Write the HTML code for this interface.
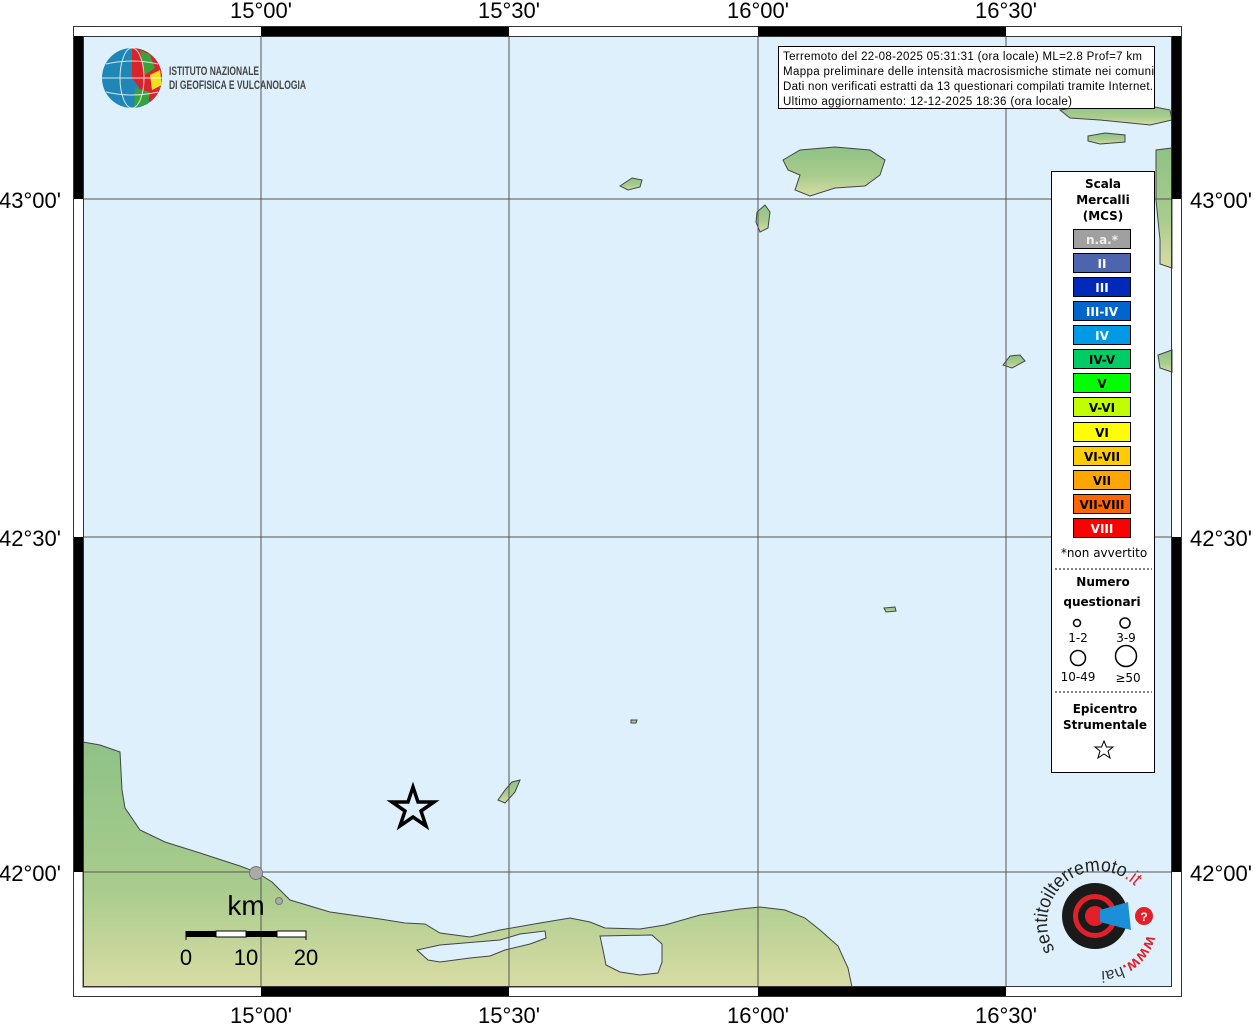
<!DOCTYPE html>
<html><head><meta charset="utf-8"><style>
body{margin:0;background:#fff;width:1255px;height:1024px;overflow:hidden;font-family:"Liberation Sans",sans-serif}
</style></head><body>
<svg width="1255" height="1024" xmlns="http://www.w3.org/2000/svg" style="position:absolute;left:0;top:0">
<defs>
<linearGradient id="land" x1="0" y1="0" x2="0" y2="1"><stop offset="0" stop-color="#8fc286"/><stop offset="0.6" stop-color="#a9cc8e"/><stop offset="1" stop-color="#d9dca4"/></linearGradient>
</defs>
<rect x="83" y="36" width="1089" height="951" fill="#dff0fd"/>
<g fill="url(#land)" stroke="#444" stroke-width="1">
<path d="M83,742 L100,745 L120,752 L122,790 L125,808 L140,830 L165,842 L200,853 L240,866 L256,872 L272,882 L290,900 L330,912 L380,919 L405,923 L425,924 L440,933 L470,937 L500,930 L540,923 L570,918 L590,922 L605,928 L640,929 L665,925 L700,915 L740,909 L760,907 L785,910 L805,918 L820,930 L838,946 L848,968 L852,987 L83,987 Z"/>
<path d="M417,950 L440,945 L500,940 L520,934 L545,931 L546,938 L530,944 L505,950 L490,956 L470,958 L440,962 L428,960 Z" fill="#dff0fd"/>
<path d="M600,936 L652,935 L662,944 L662,962 L658,973 L640,975 L620,972 L606,965 L603,950 Z" fill="#dff0fd"/>
<path d="M498,800 L505,790 L512,782 L520,780 L515,792 L505,803 Z"/>
<path d="M620,186 L632,178 L642,180 L640,187 L628,190 Z"/>
<path d="M783,160 L800,150 L835,147 L870,150 L885,160 L880,175 L865,186 L835,188 L810,196 L795,190 L800,175 L788,170 Z"/>
<path d="M757,212 L765,205 L770,212 L768,228 L760,232 L756,222 Z"/>
<path d="M1060,110 L1090,105 L1130,108 L1150,106 L1170,110 L1172,120 L1150,125 L1100,120 L1070,118 Z"/>
<path d="M1088,136 L1105,133 L1125,135 L1125,142 L1100,144 L1088,141 Z"/>
<path d="M1003,365 L1010,356 L1020,355 L1025,361 L1012,368 Z"/>
<path d="M1156,150 L1172,148 L1172,268 L1160,264 L1160,240 L1156,200 Z"/>
<path d="M1158,355 L1172,350 L1172,372 L1160,368 Z"/>
<path d="M884,608 L895,607 L896,611 L886,612 Z"/>
<path d="M631,720 L637,720 L636,723 L631,723 Z"/>
</g>
<g stroke="#555" stroke-width="1">
<line x1="261" y1="36" x2="261" y2="987"/><line x1="509" y1="36" x2="509" y2="987"/><line x1="758" y1="36" x2="758" y2="987"/><line x1="1006" y1="36" x2="1006" y2="987"/>
<line x1="83" y1="199" x2="1172" y2="199"/><line x1="83" y1="537" x2="1172" y2="537"/><line x1="83" y1="872" x2="1172" y2="872"/>
</g>
<rect x="73.5" y="26.5" width="1108" height="970" fill="none" stroke="#333"/>
<rect x="83.5" y="36.5" width="1088" height="950" fill="none" stroke="#333"/>
<g fill="#000">
<rect x="261" y="27" width="248" height="9"/><rect x="758" y="27" width="248" height="9"/>
<rect x="261" y="987" width="248" height="9"/><rect x="758" y="987" width="248" height="9"/>
<rect x="74" y="36" width="9" height="163"/><rect x="74" y="537" width="9" height="335"/>
<rect x="1172" y="36" width="9" height="163"/><rect x="1172" y="537" width="9" height="335"/>
</g>
<g font-size="22" fill="#000" text-anchor="middle" font-family="Liberation Sans,sans-serif">
<text x="261" y="18">15°00'</text><text x="509" y="18">15°30'</text><text x="758" y="18">16°00'</text><text x="1006" y="18">16°30'</text>
<text x="261" y="1023">15°00'</text><text x="509" y="1023">15°30'</text><text x="758" y="1023">16°00'</text><text x="1006" y="1023">16°30'</text>
</g>
<g font-size="22" fill="#000" font-family="Liberation Sans,sans-serif">
<text x="-1" y="208">43°00'</text><text x="-1" y="546">42°30'</text><text x="-1" y="881">42°00'</text>
<text x="1190" y="208">43°00'</text><text x="1190" y="546">42°30'</text><text x="1190" y="881">42°00'</text>
</g>
<path d="M413,787 L418,802 L434,802 L421,811 L426,826 L413,817 L400,826 L405,811 L392,802 L408,802 Z" fill="none" stroke="#000" stroke-width="3.5"/>
<circle cx="256" cy="873" r="6.5" fill="#aaa" stroke="#777"/>
<circle cx="279" cy="901" r="3.5" fill="#aaa" stroke="#777"/>
<text x="246" y="915" font-size="28" text-anchor="middle">km</text>
<rect x="186" y="931" width="30" height="6" fill="#000"/><rect x="216" y="931" width="30" height="6" fill="#fff" stroke="#000"/>
<rect x="246" y="931" width="31" height="6" fill="#000"/><rect x="277" y="931" width="29" height="6" fill="#fff" stroke="#000"/>
<line x1="186" y1="931" x2="186" y2="940" stroke="#000"/><line x1="306" y1="931" x2="306" y2="940" stroke="#000"/>
<g font-size="22" text-anchor="middle"><text x="186" y="965">0</text><text x="246" y="965">10</text><text x="306" y="965">20</text></g>
<circle cx="132" cy="78" r="30" fill="#1f87b5"/>
<path d="M132,48 A30,30 0 0 1 162,78 A30,30 0 0 1 150,102 L132,78 Z" fill="#d8242a"/>
<path d="M140,50 L150,55 L155,68 L145,75 Z" fill="#3aa23a"/>
<path d="M150,75 L160,70 L162,85 L152,90 Z" fill="#f2e01c"/>
<path d="M135,88 L150,92 L148,104 L134,107 Z" fill="#3aa23a"/>
<g stroke="#fff" stroke-width="1" fill="none" opacity="0.8"><ellipse cx="132" cy="78" rx="12" ry="30"/><line x1="102" y1="78" x2="162" y2="78"/><path d="M106,64 Q132,58 158,64 M106,92 Q132,98 158,92"/></g>
<text x="169" y="75" font-size="12" font-weight="bold" fill="#444" font-family="Liberation Sans Narrow,Liberation Sans,sans-serif" textLength="90" lengthAdjust="spacingAndGlyphs">ISTITUTO NAZIONALE</text>
<text x="169" y="89" font-size="12" font-weight="bold" fill="#444" font-family="Liberation Sans Narrow,Liberation Sans,sans-serif" textLength="137" lengthAdjust="spacingAndGlyphs">DI GEOFISICA E VULCANOLOGIA</text>
<rect x="778.5" y="46.5" width="376" height="62" fill="#fff" stroke="#000"/>
<g font-size="11.5" fill="#000">
<text x="783" y="60" textLength="359">Terremoto del 22-08-2025 05:31:31 (ora locale) ML=2.8 Prof=7 km</text>
<text x="783" y="75" textLength="371">Mappa preliminare delle intensità macrosismiche stimate nei comuni</text>
<text x="783" y="90" textLength="370">Dati non verificati estratti da 13 questionari compilati tramite Internet.</text>
<text x="783" y="105" textLength="289">Ultimo aggiornamento: 12-12-2025 18:36 (ora locale)</text>
</g>
<rect x="1051.5" y="171.5" width="103" height="601" fill="#fff" stroke="#000"/>
<g font-family="DejaVu Sans,sans-serif" font-weight="bold" font-size="12" text-anchor="middle">
<text x="1103" y="188">Scala</text><text x="1103" y="204">Mercalli</text><text x="1103" y="220">(MCS)</text>
</g>
<g stroke="#000" stroke-width="1">
<rect x="1073.5" y="229.5" width="57" height="19" fill="#a0a0a0"/>
<rect x="1073.5" y="253.5" width="57" height="19" fill="#4d64ae"/>
<rect x="1073.5" y="277.5" width="57" height="19" fill="#0029b8"/>
<rect x="1073.5" y="301.5" width="57" height="19" fill="#0066cc"/>
<rect x="1073.5" y="325.5" width="57" height="19" fill="#0099e6"/>
<rect x="1073.5" y="349.5" width="57" height="19" fill="#00cc66"/>
<rect x="1073.5" y="373.5" width="57" height="19" fill="#00ff00"/>
<rect x="1073.5" y="397.5" width="57" height="19" fill="#bfff00"/>
<rect x="1073.5" y="422.5" width="57" height="19" fill="#ffff00"/>
<rect x="1073.5" y="446.5" width="57" height="19" fill="#ffcc00"/>
<rect x="1073.5" y="470.5" width="57" height="19" fill="#ffa500"/>
<rect x="1073.5" y="494.5" width="57" height="19" fill="#ff6600"/>
<rect x="1073.5" y="518.5" width="57" height="19" fill="#ff0000"/>
</g>
<g font-family="DejaVu Sans,sans-serif" font-weight="bold" font-size="12" text-anchor="middle">
<text x="1102" y="244" fill="#eee">n.a.*</text>
<text x="1102" y="268" fill="#fff">II</text>
<text x="1102" y="292" fill="#fff">III</text>
<text x="1102" y="316" fill="#fff">III-IV</text>
<text x="1102" y="340" fill="#fff">IV</text>
<text x="1102" y="364">IV-V</text>
<text x="1102" y="388">V</text>
<text x="1102" y="412">V-VI</text>
<text x="1102" y="437">VI</text>
<text x="1102" y="461">VI-VII</text>
<text x="1102" y="485">VII</text>
<text x="1102" y="509">VII-VIII</text>
<text x="1102" y="533" fill="#fff">VIII</text>
</g>
<text x="1104" y="557" font-family="DejaVu Sans,sans-serif" font-size="12" text-anchor="middle">*non avvertito</text>
<line x1="1055" y1="569" x2="1152" y2="569" stroke="#000" stroke-dasharray="2,2"/>
<g font-family="DejaVu Sans,sans-serif" font-weight="bold" font-size="12" text-anchor="middle">
<text x="1103" y="586">Numero</text><text x="1102" y="606">questionari</text>
</g>
<g fill="none" stroke="#000" stroke-width="1.5">
<circle cx="1077" cy="623" r="3.5"/><circle cx="1125" cy="623" r="5"/><circle cx="1078" cy="658" r="7.5"/><circle cx="1126" cy="656" r="10.5"/>
</g>
<g font-family="DejaVu Sans,sans-serif" font-size="12" text-anchor="middle">
<text x="1078" y="642">1-2</text><text x="1126" y="642">3-9</text><text x="1078" y="681">10-49</text><text x="1128" y="682">≥50</text>
</g>
<line x1="1055" y1="692" x2="1152" y2="692" stroke="#000" stroke-dasharray="2,2"/>
<g font-family="DejaVu Sans,sans-serif" font-weight="bold" font-size="12" text-anchor="middle">
<text x="1105" y="713">Epicentro</text><text x="1105" y="729">Strumentale</text>
</g>
<path d="M1104,741 L1106.5,747 L1113,747 L1108,751 L1110,758 L1104,754 L1098,758 L1100,751 L1095,747 L1101.5,747 Z" fill="none" stroke="#000" stroke-width="1"/>
<circle cx="1095" cy="916" r="33" fill="#1a1a1a"/>
<circle cx="1095" cy="916" r="22" fill="#e3202a"/>
<circle cx="1095" cy="916" r="17" fill="#1a1a1a"/>
<circle cx="1095" cy="916" r="10" fill="#e3202a"/>
<path d="M1100,910 L1128,902 L1131,930 L1100,922 Z" fill="#1b8fd8"/>
<circle cx="1144" cy="916" r="9" fill="#e3202a"/>
<text x="1144" y="921" font-size="12" fill="#fff" text-anchor="middle" font-weight="bold">?</text>
<path id="arc" d="M1055,950 A45,45 0 1 1 1142,895" fill="none"/>
<text font-size="19" font-family="Liberation Sans,sans-serif" fill="#222"><textPath href="#arc" textLength="150" lengthAdjust="spacingAndGlyphs">sentitoilterremoto<tspan fill="#e3202a">.it</tspan></textPath></text>
<path id="arc2" d="M1147,935 A48,48 0 0 1 1090,970" fill="none"/>
<text font-size="16" font-family="Liberation Sans,sans-serif" font-weight="bold" fill="#e3202a"><textPath href="#arc2">www.<tspan fill="#333" font-weight="normal">hai</tspan></textPath></text>
</svg>
</body></html>
